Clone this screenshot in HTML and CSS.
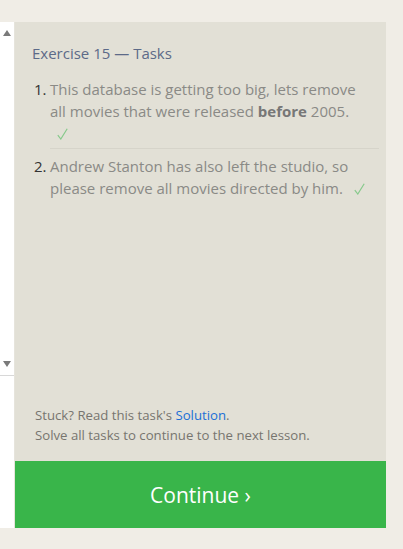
FILE: index.html
```html
<!DOCTYPE html>
<html>
<head>
<meta charset="utf-8">
<link rel="stylesheet" href="styles.css">
</head>
<body>
<div class="page">
  <div class="editor">
    <div class="scrollbar">
      <span class="arrow up"></span>
      <span class="arrow down"></span>
    </div>
  </div>
  <div class="sidebar">
    <div class="panel">
      <h2 class="title">Exercise 15 — Tasks</h2>
      <ol class="tasks">
        <li class="task">
          <span class="num">1.</span>
          <span class="text">This database is getting too big, lets remove all movies that were released <b>before</b> 2005. <svg class="check" width="11" height="12" viewBox="0 0 11 12"><path d="M0.8 7.2 L3.8 11 L10.2 0.8" fill="none" stroke="#86c98b" stroke-width="1.2"/></svg></span>
        </li>
        <li class="task">
          <span class="num">2.</span>
          <span class="text">Andrew Stanton has also left the studio, so please remove all movies directed by him. <svg class="check" width="11" height="12" viewBox="0 0 11 12"><path d="M0.8 7.2 L3.8 11 L10.2 0.8" fill="none" stroke="#86c98b" stroke-width="1.2"/></svg></span>
        </li>
      </ol>
      <div class="help">
        <p>Stuck? Read this task's <a href="#">Solution</a>.</p>
        <p>Solve all tasks to continue to the next lesson.</p>
      </div>
    </div>
    <div class="continue">Continue ›</div>
  </div>
</div>
</body>
</html>
```
FILE: styles.css
```css
html, body {
  margin: 0;
  padding: 0;
  background: #f0ede6;
  font-family: "Open Sans", "Noto Sans", sans-serif;
}
.page {
  display: flex;
  padding-top: 22px;
  height: 506px;
}
.editor {
  width: 14px;
  background: #ffffff;
  border-right: 1px solid #e6e4dc;
}
.scrollbar {
  height: 354px;
  border-bottom: 1px solid #d8d8d8;
  display: flex;
  flex-direction: column;
  justify-content: space-between;
  align-items: center;
  padding: 8px 0 8px;
  box-sizing: border-box;
}
.arrow {
  width: 0;
  height: 0;
  border-left: 4px solid transparent;
  border-right: 4px solid transparent;
}
.arrow.up { border-bottom: 6px solid #7a7a7a; }
.arrow.down { border-top: 6px solid #7a7a7a; }
.sidebar {
  width: 371px;
  display: flex;
  flex-direction: column;
}
.panel {
  flex: 1;
  background: #e2e0d6;
  padding: 20px 7px 16px 17px;
  display: flex;
  flex-direction: column;
}
.title {
  margin: 0 0 10px;
  font-size: 15px;
  font-weight: normal;
  color: #5c6a88;
  line-height: 22px;
}
.tasks {
  list-style: none;
  margin: 0;
  padding: 0;
  flex: 1;
}
.task {
  display: flex;
  font-size: 15px;
  line-height: 22px;
  color: #8a8a86;
  padding: 4px 10px 4px 0;
}
.task + .task {
  border-top: 1px solid #d6d4ca;
  margin-left: 18px;
  padding-top: 6px;
}
.task + .task .num { margin-left: -18px; }
.num {
  color: #333;
  width: 18px;
  flex: none;
  padding-left: 2px;
  box-sizing: border-box;
}
.text b { color: #777; }
.check {
  margin-left: 7px;
  vertical-align: -1px;
}
.help {
  font-size: 13.2px;
  color: #77756f;
  line-height: 20px;
  padding-left: 3px;
}
.help p { margin: 0; }
.help a { color: #1a6fd6; text-decoration: none; }
.continue {
  height: 67px;
  background: #39b54a;
  color: #fff;
  font-size: 21px;
  display: flex;
  align-items: center;
  justify-content: center;
}
```
